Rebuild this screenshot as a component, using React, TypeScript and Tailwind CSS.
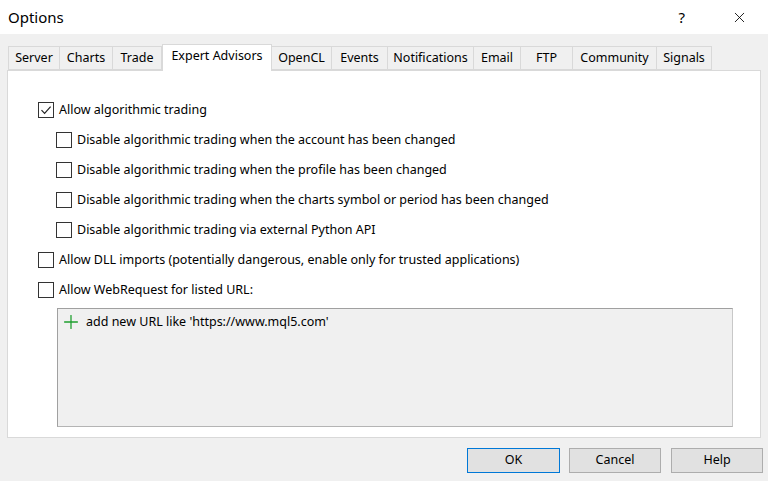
import { Plus, X } from 'lucide-react'

const tabs = [
  { label: 'Server', w: 52 },
  { label: 'Charts', w: 53 },
  { label: 'Trade', w: 49 },
  { label: 'Expert Advisors', w: 110, active: true },
  { label: 'OpenCL', w: 60 },
  { label: 'Events', w: 56 },
  { label: 'Notifications', w: 86 },
  { label: 'Email', w: 47 },
  { label: 'FTP', w: 52 },
  { label: 'Community', w: 84 },
  { label: 'Signals', w: 55 },
]

function Check({ checked }: { checked?: boolean }) {
  return (
    <span className="flex h-[16px] w-[16px] shrink-0 items-center justify-center border border-[#333333] bg-white">
      {checked && (
        <svg width="12" height="12" viewBox="0 0 12 12" fill="none">
          <path d="M1.5 6.2 L4.6 9.3 L10.6 2.6" stroke="#222" strokeWidth="1.2" />
        </svg>
      )}
    </span>
  )
}

function Row({ label, checked, sub }: { label: string; checked?: boolean; sub?: boolean }) {
  return (
    <div className={`flex h-[30px] items-center gap-[5px] ${sub ? 'pl-[18px]' : ''}`}>
      <Check checked={checked} />
      <span>{label}</span>
    </div>
  )
}

export default function App() {
  return (
    <div
      className="flex h-[481px] w-[768px] flex-col overflow-hidden bg-[#f0f0f0] text-[12.5px] text-black"
      style={{ fontFamily: '"Noto Sans", "Open Sans", sans-serif' }}
    >
      {/* title bar */}
      <div className="flex h-[34px] items-center bg-white pl-[8px]">
        <span className="text-[15px]">Options</span>
        <span className="ml-auto mr-[46px] text-[15px]">?</span>
        <X className="mr-[20px] h-[17px] w-[17px]" strokeWidth={1.2} />
      </div>

      {/* tabs */}
      <div className="mt-[10px] flex items-end pl-[8px]">
        {tabs.map((t) => (
          <div
            key={t.label}
            className={
              t.active
                ? 'relative z-10 -mb-px flex h-[27px] items-center justify-center border border-b-0 border-[#d9d9d9] bg-white pb-[3px]'
                : 'flex h-[24px] items-center justify-center border border-l-0 border-[#d9d9d9] bg-[#f0f0f0] first:border-l'
            }
            style={{ width: t.w }}
          >
            {t.label}
          </div>
        ))}
      </div>

      {/* panel */}
      <div className="ml-[7px] flex h-[368px] w-[754px] flex-col border border-[#d9d9d9] bg-white pl-[30px] pt-[24px]">
        <Row label="Allow algorithmic trading" checked />
        <Row sub label="Disable algorithmic trading when the account has been changed" />
        <Row sub label="Disable algorithmic trading when the profile has been changed" />
        <Row sub label="Disable algorithmic trading when the charts symbol or period has been changed" />
        <Row sub label="Disable algorithmic trading via external Python API" />
        <Row label="Allow DLL imports (potentially dangerous, enable only for trusted applications)" />
        <Row label="Allow WebRequest for listed URL:" />
        <div className="ml-[19px] mt-[3px] h-[119px] w-[676px] border border-[#a0a0a0] border-b-[#b4b4b4] border-r-[#c8c8c8] bg-[#f0f0f0] pl-[2px] pt-[2px]">
          <div className="flex items-center gap-[4px]">
            <Plus className="h-[22px] w-[22px] text-[#1e9e2e]" strokeWidth={1.4} />
            <span>add new URL like 'https://www.mql5.com'</span>
          </div>
        </div>
      </div>

      {/* buttons */}
      <div className="mt-[10px] flex justify-end gap-[9px] pr-[5px]">
        <button className="h-[25px] w-[93px] border border-[#0078d7] bg-[#e1e1e1]">OK</button>
        <button className="h-[25px] w-[92px] border border-[#adadad] bg-[#e1e1e1]">Cancel</button>
        <button className="ml-px h-[25px] w-[92px] border border-[#adadad] bg-[#e1e1e1]">Help</button>
      </div>
    </div>
  )
}
